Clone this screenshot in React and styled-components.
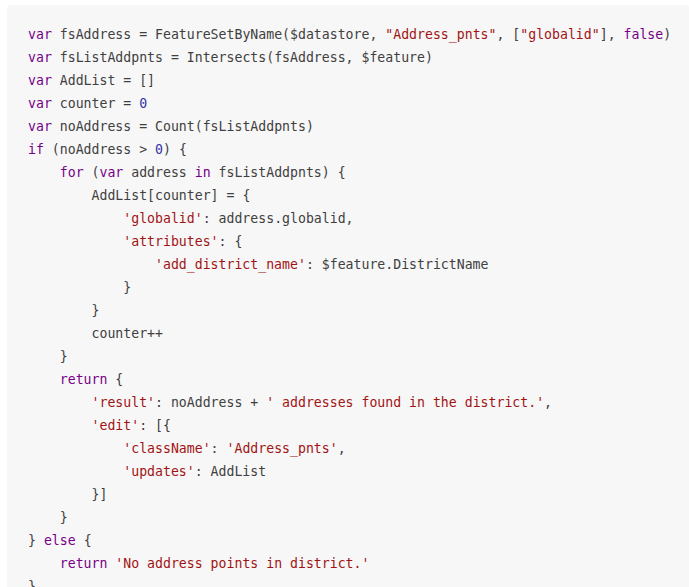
import React from "react"
import styled, { createGlobalStyle } from "styled-components"

const GlobalStyle = createGlobalStyle`
  html, body {
    margin: 0;
    padding: 0;
    background: #ffffff;
  }
`

const Page = styled.div`
  padding: 5px 0 0 7px;
  height: 587px;
  overflow: hidden;
  box-sizing: border-box;
`

const CodeBlock = styled.pre`
  margin: 0;
  background: #f7f7f7;
  border-radius: 3px;
  padding: 18px 0 20px 21px;
  font-family: "DejaVu Sans Mono", "Liberation Mono", monospace;
  font-size: 13.2px;
  line-height: 23px;
  color: #404040;
  white-space: pre;
`

const Line = styled.div`
  padding-left: ${props => props.indent * 4}ch;
  height: 23px;
`

const Kw = styled.span`
  color: #770088;
`

const Str = styled.span`
  color: #a11414;
`

const Num = styled.span`
  color: #3030a8;
`

const lines = [
  [0, <><Kw>var</Kw> fsAddress = FeatureSetByName($datastore, <Str>"Address_pnts"</Str>, [<Str>"globalid"</Str>], <Kw>false</Kw>)</>],
  [0, <><Kw>var</Kw> fsListAddpnts = Intersects(fsAddress, $feature)</>],
  [0, <><Kw>var</Kw> AddList = []</>],
  [0, <><Kw>var</Kw> counter = <Num>0</Num></>],
  [0, <><Kw>var</Kw> noAddress = Count(fsListAddpnts)</>],
  [0, <><Kw>if</Kw> (noAddress &gt; <Num>0</Num>) {"{"}</>],
  [1, <><Kw>for</Kw> (<Kw>var</Kw> address <Kw>in</Kw> fsListAddpnts) {"{"}</>],
  [2, <>AddList[counter] = {"{"}</>],
  [3, <><Str>'globalid'</Str>: address.globalid,</>],
  [3, <><Str>'attributes'</Str>: {"{"}</>],
  [4, <><Str>'add_district_name'</Str>: $feature.DistrictName</>],
  [3, <>{"}"}</>],
  [2, <>{"}"}</>],
  [2, <>counter++</>],
  [1, <>{"}"}</>],
  [1, <><Kw>return</Kw> {"{"}</>],
  [2, <><Str>'result'</Str>: noAddress + <Str>' addresses found in the district.'</Str>,</>],
  [2, <><Str>'edit'</Str>: [{"{"}</>],
  [3, <><Str>'className'</Str>: <Str>'Address_pnts'</Str>,</>],
  [3, <><Str>'updates'</Str>: AddList</>],
  [2, <>{"}]"}</>],
  [1, <>{"}"}</>],
  [0, <>{"}"} <Kw>else</Kw> {"{"}</>],
  [1, <><Kw>return</Kw> <Str>'No address points in district.'</Str></>],
  [0, <>{"}"}</>],
]

export default function App() {
  return (
    <>
      <GlobalStyle />
      <Page>
        <CodeBlock>
          {lines.map(([indent, content], i) => (
            <Line key={i} indent={indent}>
              {content}
            </Line>
          ))}
        </CodeBlock>
      </Page>
    </>
  )
}
